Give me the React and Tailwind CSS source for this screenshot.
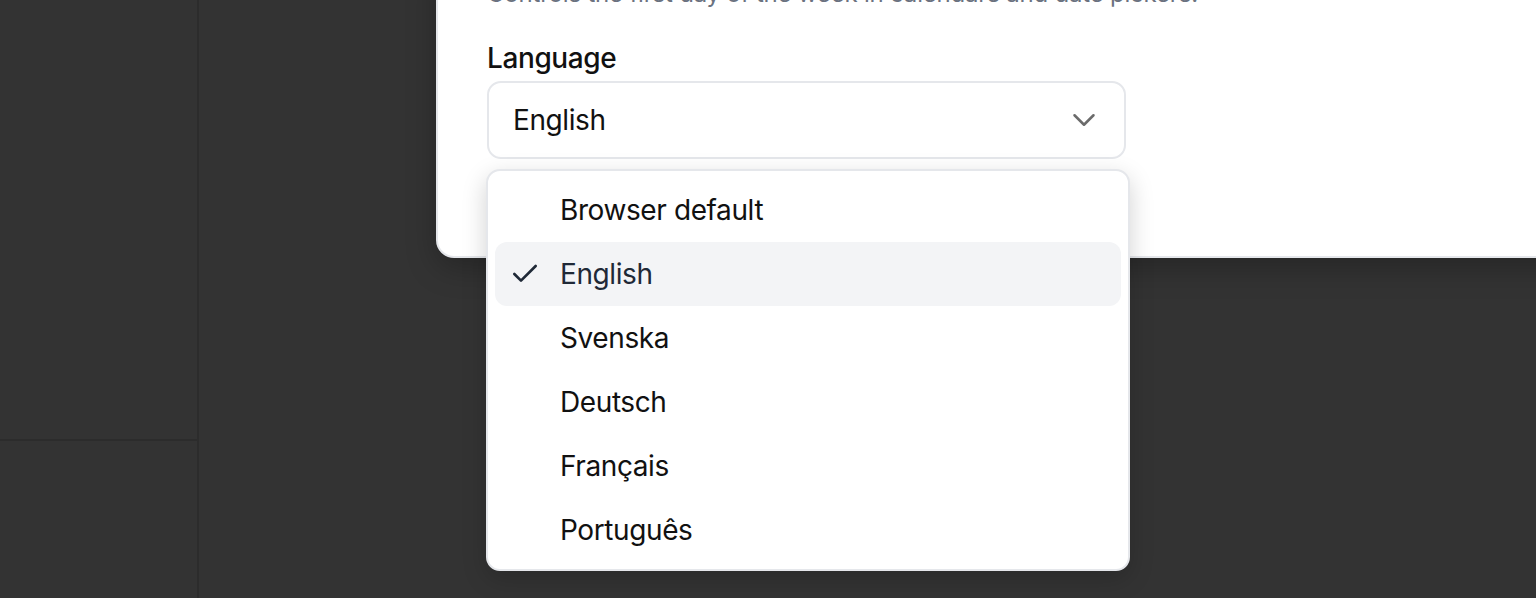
import React from 'react';

const languages = ['Browser default', 'English', 'Svenska', 'Deutsch', 'Français', 'Português'];

const CheckIcon = () => (
  <svg width="32" height="32" viewBox="0 0 24 24" fill="none" stroke="currentColor" strokeWidth="2" strokeLinecap="round" strokeLinejoin="round">
    <path d="M20 6 9 17l-5-5" />
  </svg>
);

const ChevronDown = () => (
  <svg width="38" height="38" viewBox="0 0 24 24" fill="none" stroke="currentColor" strokeWidth="1.6" strokeLinecap="round" strokeLinejoin="round">
    <path d="m6 9 6 6 6-6" />
  </svg>
);

export default function App() {
  const selected = 'English';

  return (
    <div
      className="relative w-[1536px] h-[598px] overflow-hidden bg-[#333333] flex"
      style={{ fontFamily: 'Inter, "Noto Sans", sans-serif' }}
    >
      {/* Sidebar behind the dialog */}
      <div className="w-[199px] h-full border-r-2 border-[#2c2c2c] flex flex-col">
        <div className="h-[441px] border-b-2 border-[#2c2c2c]" />
        <div className="flex-1" />
      </div>
      <div className="flex-1" />

      {/* Settings dialog */}
      <div className="absolute left-[436px] top-[-42px] w-[1160px] bg-white border-2 border-[#e5e7eb] rounded-[18px] shadow-[0_10px_30px_rgba(0,0,0,0.25)] pl-[49px] pt-[18px] pb-[97px]">
        <p className="text-[24px] leading-[32px] tracking-[-0.2px] text-[#6b7280]">
          Controls the first day of the week in calendars and date pickers.
        </p>
        <div className="mt-[30px] text-[28px] leading-[36px] tracking-[-0.4px] font-medium text-[#111111]">Language</div>
        <div className="mt-[5px] w-[639px] h-[78px] border-2 border-[#e5e7eb] rounded-[14px] flex items-center justify-between pl-[24px] pr-[21px]">
          <span className="text-[28px] tracking-[-0.4px] text-[#111111]">{selected}</span>
          <span className="text-[#6b6b6b]">
            <ChevronDown />
          </span>
        </div>
      </div>

      {/* Open listbox */}
      <div className="absolute left-[486px] top-[169px] w-[644px] bg-white border-2 border-[#e5e7eb] rounded-[14px] shadow-[0_8px_24px_rgba(0,0,0,0.18)] p-[7px]">
        {languages.map((lang) => {
          const active = lang === selected;
          return (
            <div
              key={lang}
              className={`h-[64px] rounded-[12px] flex items-center ${active ? 'bg-[#f3f4f6] text-[#1f2937]' : 'text-[#111111]'}`}
            >
              <span className="w-[65px] pl-[14px] flex items-center">
                {active && <CheckIcon />}
              </span>
              <span className="text-[28px] tracking-[-0.4px]">{lang}</span>
            </div>
          );
        })}
      </div>
    </div>
  );
}
